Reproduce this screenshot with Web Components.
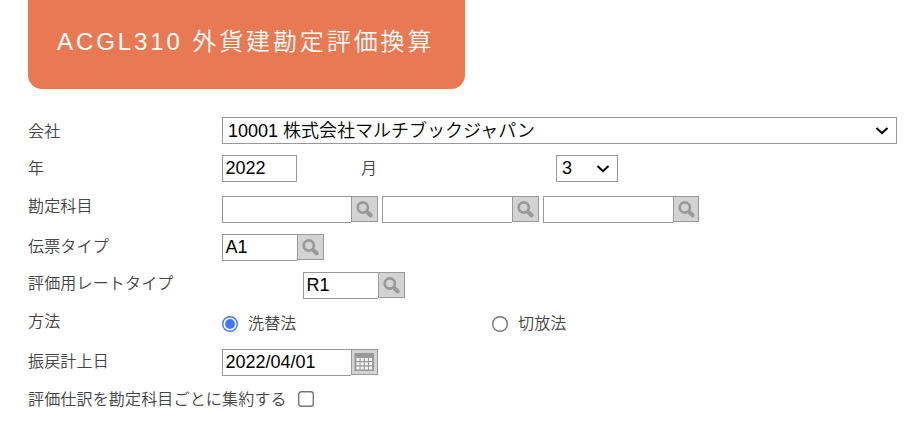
<!DOCTYPE html>
<html lang="ja">
<head>
<meta charset="utf-8">
<title>ACGL310 外貨建勘定評価換算</title>
<style>
  body {
    margin: 0;
    background: #fff;
    font-family: "Liberation Sans", "Noto Sans CJK JP", sans-serif;
    font-weight: 350;
  }
</style>
</head>
<body>
<valuation-page></valuation-page>

<script>
class PageTitle extends HTMLElement {
  constructor() {
    super();
    this.attachShadow({ mode: 'open' }).innerHTML = `
      <style>
        :host {
          display: block;
          box-sizing: border-box;
          width: 437px;
          height: 89px;
          padding: 25px 0 0 29px;
          border-radius: 0 0 14px 14px;
          background: #e87953;
          color: #fff;
          font-size: 24px;
          line-height: 34px;
          letter-spacing: 2.9px;
          white-space: nowrap;
        }
      </style>
      <slot></slot>
    `;
  }
}

class FormRow extends HTMLElement {
  constructor() {
    super();
    this.attachShadow({ mode: 'open' }).innerHTML = `
      <style>
        :host {
          display: flex;
          align-items: flex-start;
          height: var(--row-height, 38px);
        }
        .label {
          flex: none;
          min-width: var(--label-width, 194px);
          margin-top: var(--label-top, 1px);
          color: #444;
          font-size: 16px;
          line-height: 24px;
          letter-spacing: 0.17px;
          white-space: nowrap;
        }
      </style>
      <span class="label"></span>
      <slot></slot>
    `;
  }

  connectedCallback() {
    this.shadowRoot.querySelector('.label').textContent = this.getAttribute('label');
  }
}

class SelectBox extends HTMLElement {
  constructor() {
    super();
    this.attachShadow({ mode: 'open' }).innerHTML = `
      <style>
        :host {
          display: flex;
          justify-content: space-between;
          align-items: flex-start;
          box-sizing: border-box;
          width: var(--width, 62px);
          height: 27px;
          padding: 0 7px 0 5px;
          border: 1px solid #999;
          background: #fff;
          color: #000;
          font-size: 18px;
          line-height: 25px;
          white-space: nowrap;
        }
        span { margin-top: var(--text-top, 0); }
        svg { display: block; margin-top: 8px; }
      </style>
      <span><slot></slot></span>
      <svg width="14" height="10" viewBox="0 0 14 10">
        <path d="M1.5 2 L7 7.2 L12.5 2" fill="none" stroke="#000" stroke-width="2"/>
      </svg>
    `;
  }
}

const icons = {
  search: `
    <svg width="25" height="24" viewBox="0 0 25 24">
      <circle cx="10.8" cy="10.5" r="5.1" fill="none" stroke="#999" stroke-width="2.7"/>
      <path d="M14.6 14.3 L16 15.7" stroke="#999" stroke-width="2.8"/>
      <path d="M16.2 16 L18.6 18.3" stroke="#999" stroke-width="4.2" stroke-linecap="round"/>
    </svg>`,
  calendar: `
    <svg width="25" height="24" viewBox="0 0 25 24">
      <rect x="2.5" y="3" width="19.5" height="18" fill="#999"/>
      <g fill="#f4f4f4">
        <path d="M4.4 8h3.1v3h-3.1z M8.6 8h3.1v3h-3.1z M12.8 8h3.1v3h-3.1z M17 8h3.1v3h-3.1z"/>
        <path d="M4.4 12.2h3.1v3h-3.1z M8.6 12.2h3.1v3h-3.1z M12.8 12.2h3.1v3h-3.1z M17 12.2h3.1v3h-3.1z"/>
        <path d="M4.4 16.4h3.1v3h-3.1z M8.6 16.4h3.1v3h-3.1z M12.8 16.4h3.1v3h-3.1z M17 16.4h3.1v3h-3.1z"/>
      </g>
    </svg>`
};

// Text field, with a lookup button on its right when icon is set
class TextField extends HTMLElement {
  constructor() {
    super();
    this.attachShadow({ mode: 'open' });
  }

  connectedCallback() {
    const icon = this.getAttribute('icon');
    this.shadowRoot.innerHTML = `
      <style>
        :host {
          display: flex;
          align-items: flex-start;
          flex: none;
        }
        .field {
          box-sizing: border-box;
          width: var(--width, 75px);
          height: 27px;
          padding-left: 2.4px;
          border: 1px solid #999;
          background: #fff;
          color: #000;
          font-size: 18px;
          line-height: 24px;
          white-space: nowrap;
        }
        .field.joined { border-right: 0; }
        .button {
          box-sizing: border-box;
          width: var(--button-width, 27px);
          height: 26px;
          border: 1px solid #999;
          background: #d3d3d3;
          overflow: hidden;
        }
        svg { display: block; }
      </style>
      <div class="field ${icon ? 'joined' : ''}"><slot></slot></div>
      ${icon ? `<div class="button">${icons[icon]}</div>` : ''}
    `;
  }
}

class ChoiceItem extends HTMLElement {
  constructor() {
    super();
    this.attachShadow({ mode: 'open' }).innerHTML = `
      <style>
        :host {
          display: flex;
          align-items: flex-start;
          gap: 10px;
          color: #444;
          font-size: 16px;
          line-height: 24px;
          letter-spacing: 0.17px;
          white-space: nowrap;
        }
        svg { display: block; margin-top: 5px; }
        .text { margin-top: 1px; }
        :host([type="checkbox"]) svg { margin-top: 4px; }
      </style>
      <svg width="16" height="16" viewBox="0 0 16 16"></svg>
      <span class="text"><slot></slot></span>
    `;
  }

  connectedCallback() {
    const svg = this.shadowRoot.querySelector('svg');
    const color = this.hasAttribute('checked') ? '#3f76ff' : '#767676';
    if (this.getAttribute('type') === 'checkbox') {
      svg.innerHTML = `<rect x="0.7" y="0.7" width="14.6" height="14.6" rx="2.5" fill="#fff" stroke="${color}" stroke-width="1.4"/>`;
      return;
    }
    svg.innerHTML = `<circle cx="8" cy="8" r="7.3" fill="#fff" stroke="${color}" stroke-width="1.4"/>`;
    if (this.hasAttribute('checked')) {
      svg.innerHTML += `<circle cx="8" cy="8" r="4.9" fill="${color}"/>`;
    }
  }
}

class ValuationPage extends HTMLElement {
  constructor() {
    super();
    this.attachShadow({ mode: 'open' }).innerHTML = `
      <style>
        :host {
          display: block;
          box-sizing: border-box;
          height: 428px;
          padding-left: 28px;
          overflow: hidden;
        }
        .form { padding-top: 28px; }
        .month {
          width: 195px;
          margin-left: 64px;
          padding-top: 2px;
          color: #444;
          font-size: 16px;
          line-height: 24px;
        }
        .fields { display: flex; gap: 4px; }
        .company { --label-top: 3px; }
        .company select-box { --width: 675px; --text-top: 1px; }
        .year { --row-height: 41px; --label-top: 2px; }
        .account { --label-top: -1px; }
        .rate { --row-height: 39px; --label-width: 275px; --label-top: 0; }
        .method { --label-top: -1px; }
        .method choice-item:first-of-type { width: 270px; }
        .summary { --label-width: 270px; }
      </style>
      <page-title>ACGL310 外貨建勘定評価換算</page-title>
      <div class="form">
        <form-row class="company" label="会社">
          <select-box>10001 株式会社マルチブックジャパン</select-box>
        </form-row>
        <form-row class="year" label="年">
          <text-field>2022</text-field>
          <span class="month">月</span>
          <select-box>3</select-box>
        </form-row>
        <form-row class="account" label="勘定科目">
          <div class="fields">
            <text-field icon="search" style="--width: 129px"></text-field>
            <text-field icon="search" style="--width: 130px"></text-field>
            <text-field icon="search" style="--width: 130px; --button-width: 26px"></text-field>
          </div>
        </form-row>
        <form-row class="voucher" label="伝票タイプ">
          <text-field icon="search">A1</text-field>
        </form-row>
        <form-row class="rate" label="評価用レートタイプ">
          <text-field icon="search">R1</text-field>
        </form-row>
        <form-row class="method" label="方法">
          <choice-item checked>洗替法</choice-item>
          <choice-item>切放法</choice-item>
        </form-row>
        <form-row class="reversal" label="振戻計上日">
          <text-field icon="calendar" style="--width: 129px">2022/04/01</text-field>
        </form-row>
        <form-row class="summary" label="評価仕訳を勘定科目ごとに集約する">
          <choice-item type="checkbox"></choice-item>
        </form-row>
      </div>
    `;
  }
}

customElements.define('page-title', PageTitle);
customElements.define('form-row', FormRow);
customElements.define('select-box', SelectBox);
customElements.define('text-field', TextField);
customElements.define('choice-item', ChoiceItem);
customElements.define('valuation-page', ValuationPage);
</script>
</body>
</html>
